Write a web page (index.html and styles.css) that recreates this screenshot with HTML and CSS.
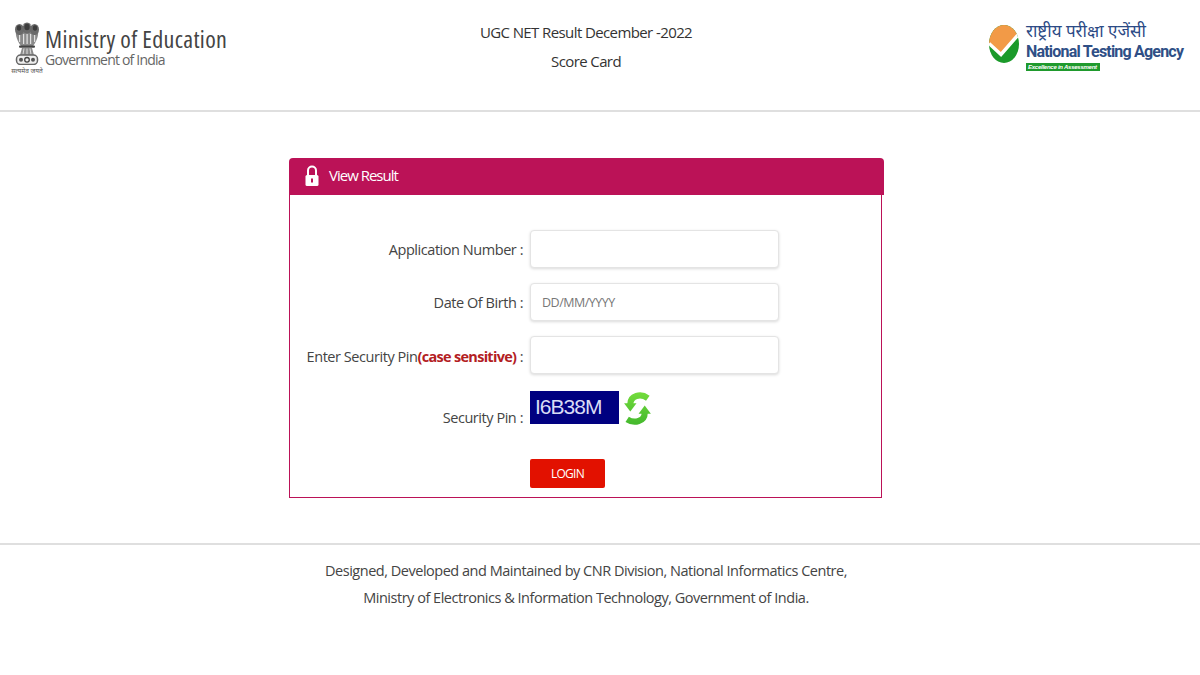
FILE: index.html
```html
<!DOCTYPE html>
<html lang="en">
<head>
<meta charset="utf-8">
<title>UGC NET Result December -2022</title>
<link rel="stylesheet" href="styles.css">
</head>
<body>
<header class="top">
  <div class="moe">
    <div class="emblem-box">
      <svg class="emblem" viewBox="0 0 26 43" width="26" height="43" aria-hidden="true">
        <path d="M2 8C1 14 4 20 7 24H19C22 20 25 14 24 8Z" fill="#8a8a8a"/>
        <g fill="#6a6a6a">
          <ellipse cx="13" cy="6" rx="5" ry="5.500"/>
          <ellipse cx="5.500" cy="7.500" rx="4.500" ry="5.500"/>
          <ellipse cx="20.500" cy="7.500" rx="4.500" ry="5.500"/>
        </g>
        <g fill="#3c3c3c">
          <ellipse cx="13" cy="5" rx="2.600" ry="3.200"/>
          <ellipse cx="5" cy="6" rx="2.200" ry="2.800"/>
          <ellipse cx="21" cy="6" rx="2.200" ry="2.800"/>
        </g>
        <g fill="#e2e2e2">
          <circle cx="9" cy="3" r=".8"/><circle cx="17" cy="3" r=".8"/>
          <rect x="5" y="13" width="1.200" height="7"/><rect x="9" y="12" width="1.200" height="10"/>
          <rect x="12.500" y="12" width="1.200" height="10"/><rect x="16" y="12" width="1.200" height="10"/>
          <rect x="20" y="13" width="1.200" height="7"/>
        </g>
        <rect x="5" y="23.500" width="16" height="2.200" rx="1" fill="#444"/>
        <path d="M8 26H18L20 33H6Z" fill="#8c8c8c"/>
        <g stroke="#e4e4e4" stroke-width=".9">
          <path d="M10 26.500 9 32.500M13 26.500V32.500M16 26.500 17 32.500"/>
        </g>
        <rect x="2.500" y="33" width="21" height="9.500" rx="4" fill="#eee" stroke="#666" stroke-width="1.500"/>
        <circle cx="7" cy="37.800" r="2" fill="#555"/>
        <circle cx="13" cy="37.800" r="2.300" fill="none" stroke="#444" stroke-width="1.300"/>
        <circle cx="19" cy="37.800" r="2" fill="#555"/>
      </svg>
      <span class="motto">सत्यमेव जयते</span>
    </div>
    <div class="moe-text">
      <div class="moe-title">Ministry of Education</div>
      <div class="moe-sub">Government of India</div>
    </div>
  </div>
  <div class="heading">
    <div>UGC NET Result December -2022</div>
    <div>Score Card</div>
  </div>
  <div class="nta">
    <svg class="nta-mark" viewBox="0 0 30 38" width="30" height="38" aria-hidden="true">
      <defs><clipPath id="ntaClip"><ellipse cx="15" cy="19" rx="15" ry="19"/></clipPath></defs>
      <g clip-path="url(#ntaClip)">
        <rect width="30" height="38" fill="#1b9a2a"/>
        <polygon points="0,0 30,0 30,8 12,29 0,19" fill="#f29a47"/>
        <polyline points="0,18.500 12,29.500 29,10" fill="none" stroke="#fff" stroke-width="3.500"/>
      </g>
    </svg>
    <div class="nta-text">
      <div class="nta-hindi">राष्ट्रीय परीक्षा एजेंसी</div>
      <div class="nta-name">National Testing Agency</div>
      <div class="nta-tag">Excellence in Assessment</div>
    </div>
  </div>
</header>

<main class="content">
  <section class="panel">
    <h2 class="panel-head">
      <svg class="lock" viewBox="0 0 14 21" width="14" height="21" aria-hidden="true">
        <path d="M3 11V5.500a4 4 0 0 1 8 0V11" fill="none" stroke="#fff" stroke-width="2"/>
        <rect x="0.500" y="10" width="13" height="11" rx="1.500" fill="#fff"/>
        <rect x="6" y="13.500" width="2" height="4" fill="#bb1257"/>
      </svg>
      <span>View Result</span>
    </h2>
    <form class="panel-body">
      <label class="label">Application Number :</label>
      <input class="field" type="text">
      <label class="label">Date Of Birth :</label>
      <input class="field" type="text" placeholder="DD/MM/YYYY">
      <label class="label label-pin-entry">Enter Security Pin<b class="hint">(case sensitive)</b> :</label>
      <input class="field" type="text">
      <span class="label label-pin">Security Pin :</span>
      <div class="captcha-row">
        <div class="captcha">I6B38M</div>
        <svg class="refresh" viewBox="0 0 26 32" width="27" height="33" aria-hidden="true">
          <defs>
            <linearGradient id="refreshFill" gradientUnits="userSpaceOnUse" x1="0" y1="0" x2="0" y2="32">
              <stop offset="0" stop-color="#74dc3c"/>
              <stop offset="1" stop-color="#43b82d"/>
            </linearGradient>
          </defs>
          <path d="M23 6C16 1 6 3.500 6 12M3 26.500C10 31 20 28.500 20 20" fill="none" stroke="url(#refreshFill)" stroke-width="6"/>
          <path d="M0 11H12L6 19Z" fill="url(#refreshFill)"/>
          <path d="M14 21H26L20 13Z" fill="url(#refreshFill)"/>
        </svg>
      </div>
      <button class="login" type="button">LOGIN</button>
    </form>
  </section>
</main>

<footer class="foot">
  <p>Designed, Developed and Maintained by CNR Division, National Informatics Centre,</p>
  <p>Ministry of Electronics &amp; Information Technology, Government of India.</p>
</footer>
</body>
</html>
```
FILE: styles.css
```css
* { box-sizing: border-box; }
html, body { margin: 0; padding: 0; }
body {
  width: 1200px;
  height: 675px;
  overflow: hidden;
  background: #fff;
  color: #444;
  font-family: "Open Sans", "Noto Sans", sans-serif;
  font-size: 14px;
}
.top {
  height: 112px;
  border-bottom: 2px solid #dfdfdf;
  display: grid;
  grid-template-columns: 1fr auto 1fr;
  align-items: start;
}
.moe { display: flex; gap: 2px; padding: 22px 0 0 11px; }
.emblem-box { width: 32px; display: flex; flex-direction: column; align-items: center; }
.emblem { display: block; filter: blur(.4px); }
.motto { font-size: 6.500px; line-height: 9px; margin-top: 1px; white-space: nowrap; color: #555; font-family: "Noto Sans", sans-serif; }
.moe-text { padding-top: 3px; }
.moe-title { font-size: 24px; line-height: 28px; color: #444; font-stretch: 75%; letter-spacing: .33px; white-space: nowrap; }
.moe-sub { font-size: 14px; line-height: 14px; color: #666; letter-spacing: -.8px; white-space: nowrap; }
.heading { padding: 18px 28px 0 0; text-align: center; font-size: 15px; line-height: 29px; color: #333; letter-spacing: -.6px; }
.nta { display: flex; gap: 7px; justify-content: flex-end; padding: 20px 16px 0 0; }
.nta-mark { display: block; margin-top: 5px; filter: blur(.3px); }
.nta-text { display: flex; flex-direction: column; align-items: flex-start; width: 158px; }
.nta-hindi { font-size: 17px; line-height: 22px; color: #2c4a85; font-family: "Noto Sans", sans-serif; white-space: nowrap; }
.nta-name { font-family: Roboto, sans-serif; font-weight: 700; font-size: 16px; line-height: 20px; color: #2f4f86; white-space: nowrap; letter-spacing: -.8px; }
.nta-tag { background: #1f9a2d; color: #fff; font-family: "Liberation Sans", sans-serif; font-style: italic; font-weight: 700; font-size: 6px; line-height: 8px; margin-top: 1px; width: 74px; padding-left: 2px; white-space: nowrap; letter-spacing: -.25px; }

.content { display: flex; justify-content: center; padding-top: 46px; height: 433px; border-bottom: 2px solid #dfdfdf; }
.panel { width: 595px; margin-left: -27px; }
.panel-head {
  margin: 0;
  height: 37px;
  background: #bb1257;
  border-radius: 4px 4px 0 0;
  display: flex;
  align-items: center;
  gap: 10px;
  padding: 0 0 3px 16px;
  color: #fff;
  font-size: 15px;
  font-weight: 400;
  letter-spacing: -1px;
}
.panel-body {
  width: 593px;
  height: 303px;
  border: 1px solid #bb1257;
  border-top: 0;
  display: grid;
  grid-template-columns: 233px 1fr;
  grid-auto-rows: min-content;
  column-gap: 7px;
  padding-top: 35px;
}
.label { font-size: 14.500px; line-height: 39px; height: 38px; text-align: right; white-space: nowrap; color: #444; letter-spacing: -.45px; margin-bottom: 15px; }
.label-pin-entry { line-height: 42px; }
.hint { color: #b3201f; font-weight: 700; letter-spacing: -.7px; }
.field {
  width: 249px;
  height: 38px;
  margin-bottom: 15px;
  border: 1px solid #e4e4e4;
  border-radius: 4px;
  box-shadow: 0 1px 3px rgba(0,0,0,.15);
  padding: 0 11px;
  font: 12.500px "Open Sans", sans-serif;
  letter-spacing: -.5px;
  background: #fff;
}
.field::placeholder { color: #777; opacity: 1; }
.label-pin { margin: 9px 0 0; }
.captcha-row { display: flex; gap: 5px; align-items: flex-start; height: 68px; margin-top: 2px; }
.captcha {
  width: 89px;
  height: 33px;
  background: #000080;
  color: #d8dcf5;
  font: 21px/32px "Liberation Sans", sans-serif;
  letter-spacing: -1px;
  padding-left: 5px;
}
.refresh { display: block; margin-top: 1px; filter: blur(.3px); }
.login {
  grid-column: 2;
  width: 75px;
  height: 29px;
  background: #e21100;
  color: #fff;
  border: 0;
  border-radius: 2px;
  font: 12px "Open Sans", sans-serif;
  letter-spacing: -.7px;
  padding: 0;
}
.foot { padding-top: 12px; text-align: center; color: #444; font-size: 14.500px; letter-spacing: -.48px; line-height: 27px; margin-left: -28px; }
.foot p { margin: 0; }
```
